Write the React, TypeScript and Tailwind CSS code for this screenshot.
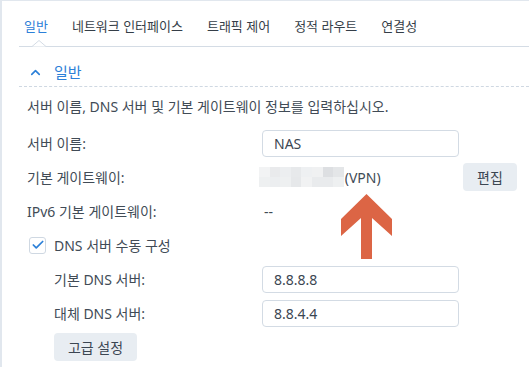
import { Check, ChevronUp } from "lucide-react";

const font = { fontFamily: '"Noto Sans", "Noto Sans CJK KR", sans-serif' };

const tabs = ["일반", "네트워크 인터페이스", "트래픽 제어", "정적 라우트", "연결성"];

// pixelated blur over the gateway address
const blur = [
  ["#f2f3f4", "#e9eaec", "#eceef0", "#e7e9eb", "#eef0f2", "#f0f1f2", "#dddfe2", "#e4e6e8"],
  ["#eef0f1", "#eceef0", "#eef0f1", "#e6e8ea", "#f1f2f3", "#e9ebed", "#e9ebed", "#eef0f1"],
];

function TextInput({ value }: { value: string }) {
  return (
    <div className="w-[197px] h-[27px] border border-[#d3dbe4] rounded-[4px] bg-white flex items-center px-[11px] text-[14px] text-[#3b4652]">
      {value}
    </div>
  );
}

function Row({ label, indent, children }: { label: string; indent?: boolean; children?: React.ReactNode }) {
  return (
    <div className="flex items-center h-[34px]">
      <div className={`${indent ? "w-[235px] pl-[27px]" : "w-[235px]"} text-[14px] text-[#414b56]`}>{label}</div>
      <div className="flex-1 flex items-center">{children}</div>
    </div>
  );
}

export default function App() {
  return (
    <div className="w-[529px] h-[367px] bg-white border-t border-l-2 border-[#e1e7ee] overflow-hidden relative" style={font}>
      {/* Tabs */}
      <div className="ml-[17px] h-[46px] pt-[6px] border-b border-[#d4dce5] flex items-center gap-[24px] pl-[5px] relative">
        {tabs.map((t, i) => (
          <span key={t} className={`text-[13px] ${i === 0 ? "text-[#2c80d8]" : "text-[#353e48]"}`}>
            {t}
          </span>
        ))}
        <svg className="absolute left-[13px] bottom-[-1px]" width="14" height="7" viewBox="0 0 14 7">
          <path d="M0 6.5 L7 0.5 L14 6.5" fill="white" stroke="#d4dce5" strokeWidth="1" />
        </svg>
      </div>

      {/* Section header */}
      <div className="ml-[17px] h-[40px] pt-[12px] border-b border-dashed border-[#cfd8e2] flex items-center pl-[9px] gap-[11px] text-[#2c80d8]">
        <ChevronUp size={15} strokeWidth={2.6} />
        <span className="text-[15px]">일반</span>
      </div>

      <div className="pl-[25px] pr-[12px]">
        <div className="h-[39px] flex items-center pb-[1px] text-[14px] text-[#414b56]">
          서버 이름, DNS 서버 및 기본 게이트웨이 정보를 입력하십시오.
        </div>

        <Row label="서버 이름:">
          <TextInput value="NAS" />
        </Row>

        <Row label="기본 게이트웨이:">
          <div className="flex flex-col ml-[-3px]">
            {blur.map((r, ri) => (
              <div key={ri} className="flex">
                {r.map((c, ci) => (
                  <div key={ci} className="w-[10.6px] h-[10px]" style={{ background: c }} />
                ))}
              </div>
            ))}
          </div>
          <span className="text-[14px] text-[#414b56] ml-[1px]">(VPN)</span>
          <div className="ml-auto w-[54px] h-[28px] rounded-[4px] bg-[#e8edf2] flex items-center justify-center text-[14px] text-[#3b4652]">
            편집
          </div>
        </Row>

        <Row label="IPv6 기본 게이트웨이:">
          <span className="text-[14px] text-[#414b56] ml-[2px]">--</span>
        </Row>

        <div className="flex items-center h-[34px] gap-[8px] pl-[2px]">
          <div className="w-[17px] h-[17px] rounded-[3px] border border-[#cfd8e2] flex items-center justify-center text-[#2c80d8]">
            <Check size={14} strokeWidth={3} />
          </div>
          <span className="text-[14px] text-[#414b56]">DNS 서버 수동 구성</span>
        </div>

        <Row label="기본 DNS 서버:" indent>
          <TextInput value="8.8.8.8" />
        </Row>
        <Row label="대체 DNS 서버:" indent>
          <TextInput value="8.8.4.4" />
        </Row>

        <div className="pl-[27px] pt-[3px]">
          <div className="w-[83px] h-[28px] rounded-[4px] bg-[#e8edf2] flex items-center justify-center text-[14px] text-[#3b4652]">
            고급 설정
          </div>
        </div>
      </div>

      {/* Annotation arrow */}
      <svg className="absolute left-[336px] top-[193px]" width="56" height="66" viewBox="0 0 56 66">
        <path d="M28.5 0 L54 25 L54 42 L34 24 L34 65 L23 65 L23 24 L3 42 L3 25 Z" fill="#dc6545" />
      </svg>
    </div>
  );
}
